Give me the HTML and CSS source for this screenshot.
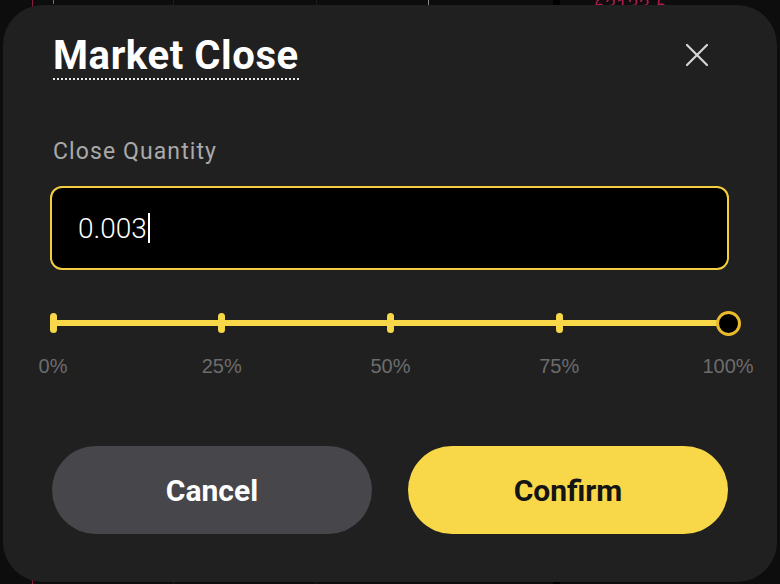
FILE: index.html
```html
<!DOCTYPE html>
<html>
<head>
    <meta charset="utf-8">
    <meta name="viewport" content="width=device-width, initial-scale=1">
    <title>Market Close</title>
    <link rel="stylesheet" href="styles.css">
</head>
<body>
    <!-- chart behind the sheet, mostly covered -->
    <div class="backdrop">
        <span class="bd-line bd-red" style="left: 32px"></span>
        <span class="bd-line bd-green" style="left: 53px"></span>
        <span class="bd-line" style="left: 173px"></span>
        <span class="bd-line" style="left: 316px"></span>
        <span class="bd-line bd-light" style="left: 428px"></span>
        <span class="bd-line bd-black" style="left: 553px"></span>
        <span class="bd-price">63133.5</span>
    </div>

    <div class="sheet">
        <div class="sheet-header">
            <h1 class="sheet-title">Market Close</h1>
            <button class="close-btn" aria-label="Close">
                <svg width="24" height="24" viewBox="0 0 24 24">
                    <path d="M2 2 L22 22 M22 2 L2 22" stroke="#d6d6d6" stroke-width="2.2" stroke-linecap="round"/>
                </svg>
            </button>
        </div>

        <label class="field-label" for="qty">Close Quantity</label>
        <div class="qty-input">
            <span id="qty" class="qty-value">0.003</span><span class="caret"></span>
        </div>

        <div class="slider">
            <div class="slider-track">
                <span class="stop"><span class="tick"></span></span>
                <span class="stop"><span class="tick"></span></span>
                <span class="stop"><span class="tick"></span></span>
                <span class="stop"><span class="tick"></span></span>
                <span class="stop"><span class="thumb"></span></span>
            </div>
            <div class="slider-labels">
                <span class="stop"><span>0%</span></span>
                <span class="stop"><span>25%</span></span>
                <span class="stop"><span>50%</span></span>
                <span class="stop"><span>75%</span></span>
                <span class="stop"><span>100%</span></span>
            </div>
        </div>

        <div class="actions">
            <button class="btn btn-cancel">Cancel</button>
            <button class="btn btn-confirm">Confirm</button>
        </div>
    </div>
</body>
</html>
```

FILE: styles.css
```css
html, body {
    margin: 0;
    height: 100%;
}
body {
    background: #0d0d0d;
    font-family: Roboto, "Liberation Sans", sans-serif;
    overflow: hidden;
    padding: 5px 3px 2px;
    box-sizing: border-box;
}
.backdrop {
    position: fixed;
    inset: 0;
    z-index: 0;
}
.bd-line {
    position: absolute;
    top: 0;
    height: 100%;
    width: 1px;
    background: #1c1c1c;
}
.bd-red { background: #8a1a40; }
.bd-green { background: #5f8a22; height: 4px; }
.bd-light { background: #8c8c8c; height: 6px; }
.bd-black { background: #000; width: 7px; }
.bd-price {
    position: absolute;
    top: -4px;
    left: 594px;
    color: #a91c48;
    font-size: 20px;
    line-height: 20px;
}
.sheet {
    position: relative;
    z-index: 1;
    height: 100%;
    background: #202020;
    border-radius: 40px;
    padding: 28px 48px 0 47px;
    box-sizing: border-box;
}
.sheet-header {
    display: flex;
    justify-content: space-between;
    align-items: flex-start;
}
.sheet-title {
    margin: 0 0 0 3px;
    color: #fff;
    font-size: 40px;
    font-weight: 700;
    letter-spacing: 0.6px;
    line-height: 45px;
    border-bottom: 2px dotted #e8e8e8;
    padding-bottom: 0;
}
.close-btn {
    background: none;
    border: none;
    padding: 0;
    margin: 10px 20px 0 0;
    cursor: pointer;
}
.field-label {
    display: block;
    margin: 57px 0 0 3px;
    color: #a9a9a9;
    font-size: 23px;
    letter-spacing: 1.1px;
    line-height: 30px;
}
.qty-input {
    margin-top: 19px;
    height: 84px;
    box-sizing: border-box;
    border: 2px solid #f3cf3d;
    border-radius: 12px;
    background: #000;
    display: flex;
    align-items: center;
    padding-left: 26px;
}
.qty-value {
    color: #fff;
    font-size: 28px;
    font-weight: 300;
}
.caret {
    width: 2px;
    height: 30px;
    background: #fff;
    margin-left: 1px;
}
.slider {
    margin: 41px 1px 0 3px;
}
.slider-track {
    position: relative;
    height: 24px;
    display: flex;
    justify-content: space-between;
    align-items: center;
}
.slider-track::before {
    content: "";
    position: absolute;
    left: 0;
    right: 0;
    top: 9px;
    height: 6px;
    background: #f8d849;
}
.stop {
    width: 0;
    display: flex;
    justify-content: center;
    align-items: center;
    position: relative;
}
.tick {
    flex: none;
    width: 7px;
    height: 20px;
    border-radius: 4px;
    background: #f8d849;
}
.thumb {
    flex: none;
    width: 19px;
    height: 19px;
    border-radius: 50%;
    background: #000;
    border: 3px solid #eabb2c;
}
.slider-labels {
    margin-top: 19px;
    display: flex;
    justify-content: space-between;
    color: #6c6c6c;
    font-family: "Liberation Sans", Arial, sans-serif;
    font-size: 20px;
    line-height: 24px;
}
.slider-labels span {
    white-space: nowrap;
}
.actions {
    display: flex;
    gap: 36px;
    margin: 68px 1px 0 2px;
}
.btn {
    flex: 1;
    height: 88px;
    border: none;
    border-radius: 44px;
    font-family: Roboto, "Liberation Sans", sans-serif;
    font-size: 30px;
    font-weight: 700;
    cursor: pointer;
}
.btn-cancel {
    background: #46464b;
    color: #fff;
}
.btn-confirm {
    background: #f8d849;
    color: #141414;
}
```
